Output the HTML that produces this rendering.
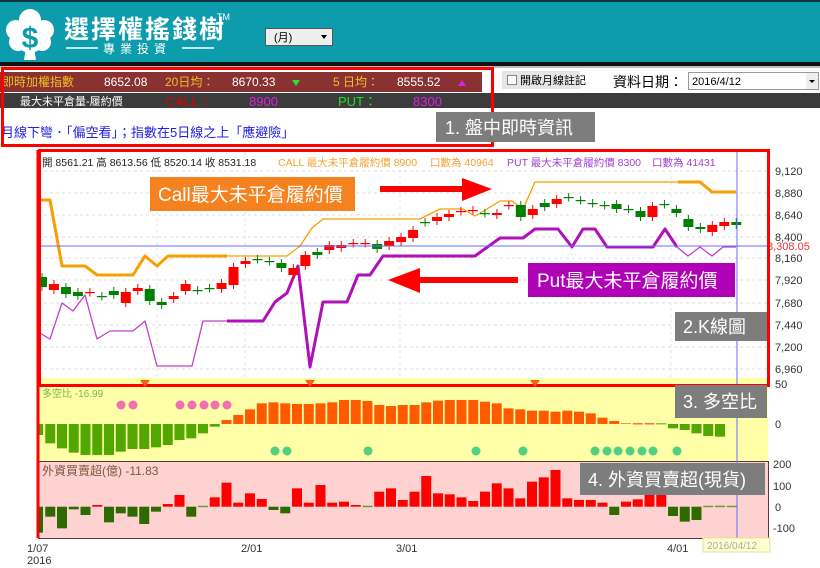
<!DOCTYPE html>
<html><head><meta charset="utf-8">
<style>
html,body{margin:0;padding:0;width:820px;height:568px;overflow:hidden;background:#fff;font-family:"Liberation Sans","Noto Sans CJK TC",sans-serif;}
svg{display:block}
text{font-family:"Liberation Sans","Noto Sans CJK TC",sans-serif;}
</style></head><body>
<svg id="s" width="820" height="568" viewBox="0 0 820 568" xmlns="http://www.w3.org/2000/svg">
<!-- header -->
<rect x="0" y="0" width="820" height="62" fill="#0d9cac"/>
<rect x="0" y="0" width="820" height="2" fill="#134"/>
<rect x="0" y="62" width="820" height="4" fill="#111"/>
<rect x="0" y="66" width="820" height="2" fill="#bbb"/>
<!-- logo -->
<g fill="#fff">
<circle cx="30" cy="20" r="11"/><circle cx="16" cy="30" r="10"/><circle cx="44" cy="30" r="10"/>
<circle cx="18" cy="42" r="9"/><circle cx="42" cy="42" r="9"/><circle cx="30" cy="40" r="13"/>
<path d="M26 48 L34 48 L36 60 L24 60 Z"/>
</g>
<text x="30" y="48" font-size="30" font-weight="bold" fill="#0d9cac" text-anchor="middle">$</text>
<text x="64" y="38" font-size="25" font-weight="bold" fill="#fff" letter-spacing="2">選擇權搖錢樹</text>
<text x="217" y="20" font-size="9" fill="#fff">TM</text>
<line x1="66" y1="48" x2="98" y2="48" stroke="#fff" stroke-width="1.5"/>
<line x1="182" y1="48" x2="214" y2="48" stroke="#fff" stroke-width="1.5"/>
<text x="103" y="53" font-size="12" fill="#fff" letter-spacing="5">專業投資</text>
<rect x="265.5" y="28.5" width="67" height="17" fill="#eee" stroke="#555"/>
<text x="274" y="41" font-size="11" fill="#000">(月)</text>
<path d="M321 35 L327 35 L324 39 Z" fill="#000"/>
<!-- info rows -->
<rect x="0" y="72" width="482" height="20" fill="#8a3232"/>
<rect x="0" y="93" width="820" height="15" fill="#3c3c3c"/>
<text x="2" y="86" font-size="12" fill="#f0c020">即時加權指數</text>
<text x="104" y="86" font-size="12" fill="#fff">8652.08</text>
<text x="165" y="86" font-size="12" fill="#f0c020">20日均：</text>
<text x="232" y="86" font-size="12" fill="#fff">8670.33</text>
<path d="M292 80 L300 80 L296 86 Z" fill="#2ee02e"/>
<text x="333" y="86" font-size="12" fill="#f0c020">5 日均：</text>
<text x="397" y="86" font-size="12" fill="#fff">8555.52</text>
<path d="M458 86 L466 86 L462 80 Z" fill="#e020e0"/>
<text x="20" y="105" font-size="11" fill="#fff">最大未平倉量-履約價</text>
<text x="166" y="106" font-size="13" fill="#e00000">CALL：</text>
<text x="249" y="106" font-size="13" fill="#e020e0">8900</text>
<text x="338" y="106" font-size="13" fill="#20e020">PUT：</text>
<text x="413" y="106" font-size="13" fill="#e020e0">8300</text>
<text x="1" y="137" font-size="13" fill="#2020e0">月線下彎．「偏空看」；指數在5日線之上「應避險」</text>
<rect x="502" y="71" width="78" height="18" fill="#e6e6e6"/>
<rect x="507.5" y="75.5" width="9" height="9" fill="#fff" stroke="#888"/>
<text x="520" y="84" font-size="11" fill="#000">開啟月線註記</text>
<text x="613" y="87" font-size="14" fill="#000">資料日期：</text>
<rect x="688.5" y="72.5" width="130" height="17" fill="#fff" stroke="#999"/>
<text x="692" y="85" font-size="11" fill="#000">2016/4/12</text>
<rect x="806" y="73" width="12" height="16" fill="#eee"/>
<path d="M809 80 L815 80 L812 83 Z" fill="#000"/>
<rect x="2.5" y="68.5" width="490" height="77" fill="none" stroke="#f00" stroke-width="3"/>
<rect x="436" y="112" width="159" height="30" fill="#7d7d7d"/>
<text x="445" y="134" font-size="18" fill="#fff">1. 盤中即時資訊</text>

<!-- chart -->
<rect x="769" y="150" width="51" height="400" fill="#fff"/>
<g id="grid"></g>
<rect x="38" y="378" width="730" height="83" fill="#ffffa8"/>
<rect x="38.5" y="461.5" width="730" height="77" fill="#ffd2d2" stroke="#5a3a3a"/>
<g id="lower"></g>
<g id="main"></g>
<line x1="38" y1="246" x2="768" y2="246" stroke="#6a6aff" stroke-width="1"/>
<line x1="737" y1="150" x2="737" y2="538" stroke="#6a6aff" stroke-width="1"/>
<text x="767" y="250" font-size="11" fill="#f03030">8,308.05</text>
<text x="42" y="166" font-size="10.5" fill="#222">開 8561.21  高 8613.56  低 8520.14  收 8531.18</text>
<text x="278" y="166" font-size="10.5" fill="#f5a030">CALL 最大未平倉履約價 8900</text>
<text x="430" y="166" font-size="10.5" fill="#f5a030">口數為 40964</text>
<text x="507" y="166" font-size="10.5" fill="#a040d0">PUT 最大未平倉履約價 8300</text>
<text x="652" y="166" font-size="10.5" fill="#a040d0">口數為 41431</text>
<g font-size="11" fill="#333">
<text x="775" y="175">9,120</text><text x="775" y="197">8,880</text><text x="775" y="219">8,640</text><text x="775" y="241">8,400</text>
<text x="775" y="262">8,160</text><text x="775" y="284">7,920</text><text x="775" y="307">7,680</text><text x="775" y="329">7,440</text>
<text x="775" y="351">7,200</text><text x="775" y="373">6,960</text>
<text x="775" y="388">50</text><text x="775" y="428">0</text>
<text x="773" y="468">200</text><text x="773" y="490">100</text><text x="775" y="511">0</text><text x="773" y="532">-100</text>
<text x="27" y="552">1/07</text><text x="27" y="564">2016</text>
<text x="241" y="552">2/01</text><text x="396" y="552">3/01</text><text x="667" y="552">4/01</text>
</g>
<rect x="703" y="538" width="67" height="14" fill="#ffffd0" stroke="#e0e0a0"/>
<text x="707" y="549" font-size="10" fill="#aaa">2016/04/12</text>
<text x="42" y="397" font-size="10" fill="#7cb342">多空比 -16.99</text>
<text x="42" y="475" font-size="12" fill="#7a5a40">外資買賣超(億) -11.83</text>
<line x1="38" y1="150" x2="38" y2="538" stroke="#f00" stroke-width="3"/>
<rect x="39.5" y="150.5" width="729" height="235" fill="none" stroke="#f00" stroke-width="3"/>
<g fill="#ff5a1a"><path d="M140 380 L150 380 L145 387 Z"/><path d="M305 380 L315 380 L310 387 Z"/><path d="M530 380 L540 380 L535 387 Z"/></g>
<!-- labels -->
<rect x="150" y="177" width="205" height="34" fill="#f5821f"/>
<text x="158" y="201" font-size="19" fill="#fff">Call最大未平倉履約價</text>
<rect x="380" y="186" width="84" height="6" fill="#f00"/>
<path d="M462 178 L492 189 L462 201 Z" fill="#f00"/>
<rect x="418" y="277" width="100" height="6" fill="#f00"/>
<path d="M388 280 L420 268 L420 293 Z" fill="#f00"/>
<rect x="528" y="263" width="207" height="34" fill="#b000b8"/>
<text x="537" y="287" font-size="19" fill="#fff">Put最大未平倉履約價</text>
<rect x="675" y="312" width="92" height="29" fill="#7d7d7d"/>
<text x="683" y="333" font-size="18" fill="#fff">2.K線圖</text>
<rect x="675" y="385" width="92" height="33" fill="#7d7d7d"/>
<text x="683" y="408" font-size="18" fill="#fff">3. 多空比</text>
<rect x="580" y="463" width="185" height="32" fill="#7d7d7d"/>
<text x="588" y="486" font-size="18" fill="#fff">4. 外資買賣超(現貨)</text>
</svg>
<script>
var NS="http://www.w3.org/2000/svg";
function el(p,t,a){var e=document.createElementNS(NS,t);for(var k in a)e.setAttribute(k,a[k]);document.getElementById(p).appendChild(e);return e;}
// grid
[171,193,215,237,258,280,303,325,347,369].forEach(function(y){el('grid','line',{x1:38,x2:768,y1:y,y2:y,stroke:'#ddd','stroke-dasharray':'3,3'});});
[401,446,486,528].forEach(function(y){el('grid','line',{x1:38,x2:768,y1:y,y2:y,stroke:'#ccc','stroke-dasharray':'3,3'});});
[157,245,400,671].forEach(function(x){el('grid','line',{x1:x,x2:x,y1:152,y2:538,stroke:'#e4e4e4','stroke-dasharray':'3,3'});});
// lower panels
var ds=[195,220,235,248,255,255,255,245,237,237,232,225,210,205,190,170,150,135,118,100,97,100,102,102,100,97,90,90,93,105,108,105,105,97,92,90,90,90,95,100,115,118,122,122,125,122,125,130,143,153,160,162,163,165,175,180,190,198,200];
var fs=[488,440,475,418,435,405,457,430,440,462,425,402,375,440,410,382,338,398,370,387,420,430,355,398,345,398,395,405,412,365,355,390,365,318,370,373,382,393,365,340,355,385,335,322,300,385,390,390,398,435,395,388,375,375,438,455,450,412,412,412];
ds.forEach(function(z,i){var x=38.5+11.75*i-5,y=370+z/3;
 if(i==0)x=38;
 if(z<161)el('lower','rect',{x:x,y:y,width:i?10:5,height:424-y,fill:'#ff5a00'});
 else if(z>166)el('lower','rect',{x:x,y:424,width:i?10:5,height:y-424,fill:'#52a800'});
 else el('lower','rect',{x:x,y:423,width:10,height:1.5,fill:z<164?'#ff7040':'#8cc040'});});
fs.forEach(function(z,i){var x=38.5+11.75*i-5,y=370+z/3,zero=506.7;
 if(i==0)x=38;
 if(z<408)el('lower','rect',{x:x,y:y,width:i?10:5,height:zero-y,fill:'#ff0000'});
 else if(z>412)el('lower','rect',{x:x,y:zero,width:i?10:5,height:y-zero,fill:'#2d6a00'});
 else el('lower','rect',{x:x,y:zero-1,width:10,height:1.5,fill:'#6a9a40'});});
[121,133,180,192,204,215,227].forEach(function(x){el('lower','circle',{cx:x,cy:405,r:4.5,fill:'#f070b0'});});
[275,287,368,476,523,595,607,618,630,642,653,677].forEach(function(x){el('lower','circle',{cx:x,cy:451,r:4.5,fill:'#50d080'});});
// lines
function pl(pts,c,w){el('main','polyline',{points:pts,fill:'none',stroke:c,'stroke-width':w,'stroke-linejoin':'round'});}
pl("38,200 50,200 62,266 85,266 97,275 133,275 145,256 157,266 168,256 227,256",'#f5a000',3);
pl("227,256 287,256 300,246 312,228 323,219 420,219 440,209 463,209 475,216 487,209 500,201 512,201 523,209 535,182 678,182",'#f5a000',1.3);
pl("678,182 700,182 712,192 736,192",'#f5a000',3);
pl("38,332 50,339 62,303 73,311 85,295 97,339 110,331 133,331 145,321 157,366 192,366 203,321 227,321",'#c040c8',1.3);
pl("227,321 263,321 275,302 287,293 298,266 310,367 323,302 347,302 358,275 370,275 383,256 475,256 500,238 523,238 535,229 558,229 572,247 583,229 595,229 607,247 653,247 665,229 677,247",'#b010b8',3);
pl("677,247 688,256 700,247 712,256 723,247 736,247",'#c040c8',1.3);
// candles [top,bottom,color]
var c=[[277,287,'g'],[284,290,'r'],[287,294,'g'],[292,296,'g'],[292,292.5,'r'],[296,296.5,'g'],[291,295,'g'],[292,303,'r'],[288,291,'r'],[289,301,'g'],[302,305,'g'],[296,299,'r'],[284,291,'r'],[290,290.5,'g'],[288,288.5,'g'],[283,289,'r'],[267,285,'r'],[261,264,'r'],[259,259.5,'g'],[261,261.5,'g'],[263,268,'g'],[268,275,'r'],[255,266,'r'],[252,255,'g'],[245,250,'r'],[245,248,'r'],[243,243.5,'r'],[243,243.5,'r'],[244,249,'g'],[241,246,'r'],[237,242,'r'],[230,238,'r'],[222,222.5,'g'],[217,221,'r'],[214,217,'r'],[211,211.5,'r'],[210,210.5,'r'],[213,213.5,'g'],[213,215,'r'],[205,205.5,'r'],[205,217,'g'],[209,215,'r'],[203,207,'g'],[199,204,'r'],[197,197.5,'g'],[200,200.5,'g'],[203,203.5,'g'],[205,205.5,'g'],[204,209,'g'],[209,209.5,'g'],[211,217,'g'],[206,217,'r'],[204,204.5,'g'],[209,213,'g'],[219,227,'g'],[227,229,'g'],[225,232,'r'],[222,226,'r'],[222,225,'g']];
c.forEach(function(d,i){var x=42+11.97*i,col=d[2]=='r'?'#f00':'#008000';
 el('main','line',{x1:x,x2:x,y1:d[0]-4,y2:d[1]+4,stroke:col,'stroke-width':1});
 el('main','rect',{x:x-5,y:d[0],width:10,height:Math.max(1.2,d[1]-d[0]),fill:col});});
</script>
</body></html>
